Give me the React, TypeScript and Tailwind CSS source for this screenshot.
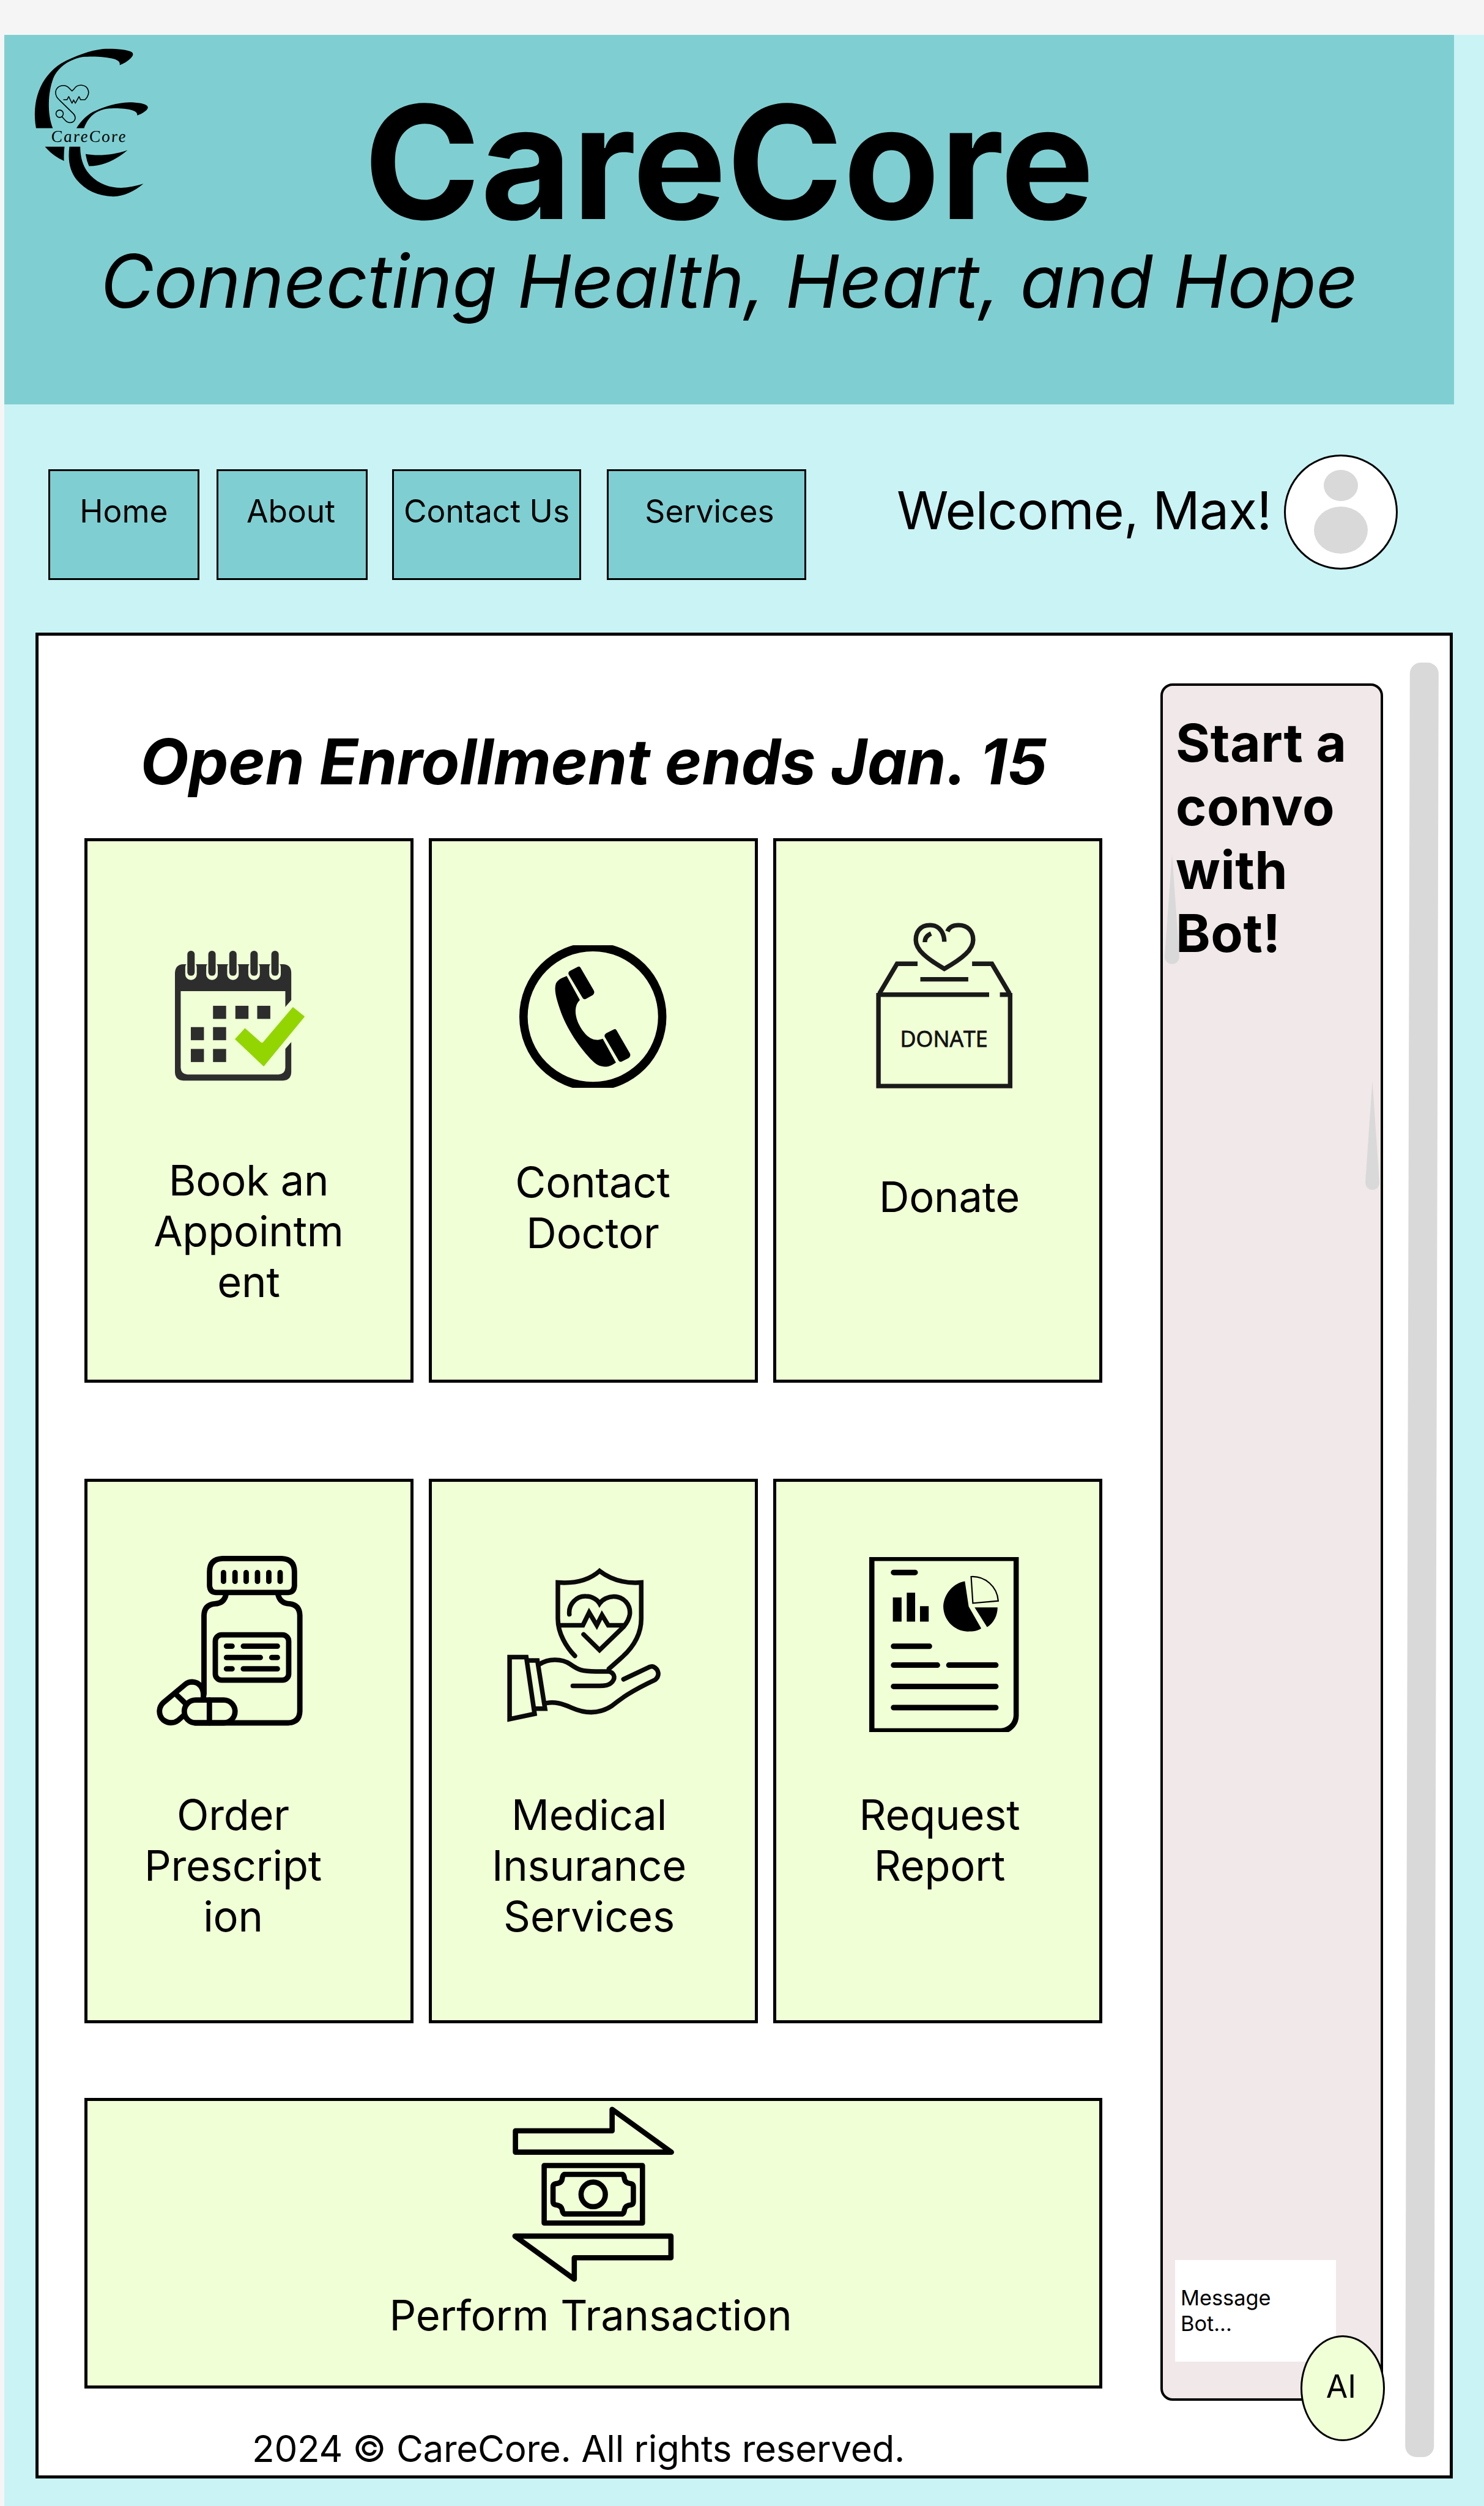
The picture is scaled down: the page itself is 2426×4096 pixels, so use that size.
import React from "react";

type IconProps = { className?: string };

const INK = "#000";

function Logo({ className }: IconProps) {
  return (
    <svg viewBox="0 0 840 960" className={className} aria-label="CareCore logo">
      <path d="M87 524 C60 370 110 230 230 153 C310 108 400 78 470 70 C530 67 610 73 634 88 C648 98 642 110 630 123 C612 140 590 155 566 163 C570 145 556 135 535 128 C480 112 400 112 355 116 C280 130 215 170 185 240 C155 320 150 440 183 524Z" />
      <path d="M318 524 C345 480 385 440 430 423 C480 400 550 378 620 376 C670 376 715 384 724 397 C732 407 725 417 712 427 C695 440 680 447 666 451 C669 440 660 428 640 422 C600 410 540 408 500 412 C430 420 385 460 362 524Z" />
      <path d="M138 630 H250 Q245 670 247 711 Q185 685 138 630Z" />
      <path d="M278 630 H340 C340 700 360 755 400 795 C450 845 510 865 575 865 C620 864 660 855 702 842 C650 885 590 915 530 915 C440 912 370 880 320 820 C280 770 268 710 278 630Z" />
      <path d="M371 672 C440 684 520 680 611 650 C545 705 470 742 390 741 Q376 710 371 672Z" />
      <g fill="none" stroke={INK} strokeWidth="5.5" strokeLinejoin="round">
        <path d="M243 361 H264 L274 343 L293 381 L302 362 L312 381 L333 343 L342 361 H367 C385 345 392 320 385 305 C375 275 325 265 305 299 L293 311 L275 293 C250 268 205 280 199 315 C197 340 210 352 222 364 L300 440 C315 455 315 475 300 487 C285 495 268 493 255 480 L236 459" />
        <circle cx="222" cy="441" r="21" />
      </g>
      <g transform="translate(176 603) skewX(6)">
        <text
          fontFamily="'Liberation Serif', serif"
          fontStyle="italic"
          fontSize="96"
          textLength="428"
          lengthAdjust="spacing"
        >
          CareCore
        </text>
      </g>
    </svg>
  );
}

function CalendarIcon({ className }: IconProps) {
  const rings = [256, 376, 496, 617, 737];
  const days = [
    [382, 422],
    [510, 422],
    [635, 422],
    [255, 544],
    [382, 544],
    [255, 669],
    [382, 669],
  ];
  return (
    <svg viewBox="150 100 760 760" className={className} fill="#2d2d2d">
      <path
        fillRule="evenodd"
        d="M212 184 H782 Q830 186 830 234 V802 Q828 848 782 850 H212 Q166 848 164 802 V234 Q166 186 212 184Z M197 338 V777 Q199 813 235 815 H758 Q794 813 796 777 V338Z"
      />
      <path d="M790 435 L836 383 V623 L790 675Z" fill="#f0ffd6" />
      {rings.map((x) => (
        <g key={x}>
          <rect x={x - 33} y="170" width="66" height="104" rx="32" fill="#f0ffd6" />
          <rect x={x - 21} y="107" width="42" height="143" rx="20" />
        </g>
      ))}
      {days.map(([x, y]) => (
        <rect key={`${x}-${y}`} x={x} y={y} width="75" height="75" />
      ))}
      <path
        d="M565 554 L655 634 Q662 638 669 634 L840 433 L903 484 L672 765 L511 613Z"
        fill="#93d500"
        stroke="#93d500"
        strokeWidth="6"
        strokeLinejoin="round"
      />
    </svg>
  );
}

function PhoneIcon({ className }: IconProps) {
  return (
    <svg viewBox="60 196 432 817" preserveAspectRatio="none" className={className}>
      <path
        fillRule="evenodd"
        d="M63.5 605 A212 424.6 0 0 1 487.5 605 A212 424.6 0 0 1 63.5 605Z M87.5 605 A188 374 0 0 0 463.5 605 A188 374 0 0 0 87.5 605Z"
      />
      <path d="M200 372 L238 510 C222 540 223 590 232 635 C243 685 262 735 285 738 C293 739 298 736 304 732 L342 868 C330 885 318 893 310 892 C298 891 288 885 275 860 C240 790 200 680 180 560 C170 500 163 450 169 415 C175 390 190 380 200 372Z" />
      <path d="M232 320 Q237 314 240 325 L278 455 Q282 470 275 482 L256 503 Q250 510 246 498 L206 365 Q203 352 209 343Z" />
      <path d="M336 678 Q341 672 344 684 L382 815 Q386 830 379 842 L359 862 Q353 868 350 858 L310 722 Q307 710 314 700Z" />
    </svg>
  );
}

function DonateIcon({ className }: IconProps) {
  return (
    <svg viewBox="1085 55 405 970" preserveAspectRatio="none" className={className}>
      <g fill="none" stroke="#1a1a1a" strokeWidth="7.4" className="[&_*]:[vector-effect:non-scaling-stroke]">
        <path d="M1097.5 468 V1001 H1476.5 V468" />
        <path d="M1097 478 H1416 M1447 478 H1477" />
        <path d="M1100 472 L1151 301 H1210 M1367 301 H1424 L1475 472" />
        <path d="M1218 390 H1356" />
        <path d="M1287 175 C1287 130 1275 80 1246 80 C1215 80 1205 125 1205 165 C1205 220 1235 270 1287 330 C1340 270 1370 220 1370 165 C1370 115 1355 80 1328 80 C1310 80 1300 95 1296 116" />
        <path d="M1231 178 C1231 155 1237 138 1249 128" />
      </g>
      <text
        transform="translate(1160 775) scale(1.762 3.506)"
        fontFamily="'Open Sans', sans-serif"
        fontSize="36"
        fontWeight="500"
        textLength="143"
        lengthAdjust="spacingAndGlyphs"
        fill="#111"
        stroke="#111"
        strokeWidth="0.9"
      >
        DONATE
      </text>
    </svg>
  );
}

function PrescriptionIcon({ className }: IconProps) {
  return (
    <svg
      viewBox="50 80 860 1000"
      className={className}
      fill="none"
      stroke={INK}
      strokeWidth="31"
      strokeLinecap="round"
      strokeLinejoin="round"
    >
      <path d="M435 109 H775 Q848 112 848 185 V265 Q846 302 812 304 H397 Q363 302 361 265 V185 Q361 112 435 109Z" />
      <path d="M441 190 V240 M507 190 V240 M571 190 V240 M636 190 V240 M701 190 V240 M766 190 V240" />
      <path d="M456 312 Q446 367 390 369 Q331 375 329 435 V885 L325 908" />
      <path d="M753 312 Q764 367 820 369 Q877 375 879 435 V985 Q877 1048 815 1052 H275" />
      <rect x="394" y="547" width="421" height="260" rx="36" />
      <path d="M458 612 H490 M555 612 H750 M458 677 H652 M718 677 H750 M458 742 H490 M555 742 H750" />
      <rect x="216" y="921" width="291" height="131" rx="65" />
      <path d="M360 921 V1052" />
      <path d="M325 905 C330 850 300 818 262 817 Q238 817 220 832 L98 934 C64 965 68 1010 95 1035 C125 1058 158 1054 180 1038 L212 1010" />
      <path d="M165 885 L220 938" />
    </svg>
  );
}

function InsuranceIcon({ className }: IconProps) {
  return (
    <svg viewBox="35 155 465 900" preserveAspectRatio="none" className={className}>
      <g
        fill="none"
        stroke="#0a0a0a"
        strokeWidth="7.5"
        strokeLinecap="round"
        className="[&_*]:[vector-effect:non-scaling-stroke]"
      >
        <path d="M239 668 C215 620 190 540 190 455 V248 C240 255 280 235 310 182 C345 235 385 255 430 248 V455 C430 560 400 630 375 675 L337 742" />
        <path d="M223 430 C220 370 245 325 270 327 C290 327 305 350 310 368 C318 345 335 327 352 328 C380 330 400 375 397 430 C395 460 388 480 380 500 L310 635 L264 545" />
        <path d="M196 493 H262 L280 420 L302 493 L317 434 L335 493 H378" />
        <path d="M51 675 H99 L123 1000 L51 1030Z" />
        <path d="M105 694 H131 L153 970 H125" />
        <path d="M138 715 C160 685 200 680 225 715 C250 750 260 757 300 757 H338 C355 770 357 800 342 825 C335 838 325 840 310 840 H233" />
        <path d="M157 938 C180 930 200 938 230 965 C270 1000 310 1000 345 955 C370 915 400 870 470 805 C485 780 480 745 465 730 Q460 726 452 733 L379 802" />
      </g>
    </svg>
  );
}

function ReportIcon({ className }: IconProps) {
  return (
    <svg viewBox="1080 95 445 1015" preserveAspectRatio="none" className={className}>
      <path
        fillRule="evenodd"
        d="M1087 102 H1517 V1010 C1517 1060 1500 1090 1488 1103 H1087Z M1102 125 V1081 H1465 C1490 1078 1502 1040 1502 1005 V125Z"
      />
      <path d="M1155 333 H1180 V471 H1155Z M1195 306 H1219 V471 H1195Z M1233 383 H1258 V471 H1233Z" />
      <path d="M1362 240 L1373 385 L1409 510 C1400 525 1385 528 1370 528 C1330 525 1300 460 1300 383 C1302 310 1330 250 1362 240Z" />
      <path d="M1390 390 H1456 C1456 435 1445 480 1426 503Z" />
      <g fill="none" stroke={INK} className="[&_*]:[vector-effect:non-scaling-stroke]">
        <path d="M1380 214 C1420 210 1455 270 1458 353 L1385 366Z" strokeWidth="2.2" />
        <path
          d="M1157 190 H1219 M1157 612 H1260 M1157 720 H1283 M1316 720 H1451 M1157 842 H1451 M1157 963 H1451"
          strokeWidth="9"
          strokeLinecap="round"
        />
      </g>
    </svg>
  );
}

function TransactionIcon({ className }: IconProps) {
  return (
    <svg viewBox="170 115 710 675" preserveAspectRatio="none" className={className}>
      <g
        fill="none"
        stroke={INK}
        strokeWidth="8.6"
        strokeLinejoin="round"
        className="[&_*]:[vector-effect:non-scaling-stroke]"
      >
        <path d="M190 215 H604 V135 L858 295 H190Z" />
        <path d="M188 609 H856 V690 H442 V770Z" />
        <path d="M313 345 H734 V560 H313Z" />
        <path d="M400 378 H648 Q655 380 657 395 Q660 411 685 413 Q695 415 695 425 V480 Q695 490 685 492 Q660 494 657 510 Q655 524 648 526 H400 Q392 524 390 510 Q386 494 362 492 Q351 490 351 480 V425 Q351 415 362 413 Q388 411 390 395 Q392 380 400 378Z" />
        <ellipse cx="523" cy="453" rx="52" ry="46" />
      </g>
    </svg>
  );
}

function Spike({ className }: IconProps) {
  return (
    <svg viewBox="0 0 24 180" preserveAspectRatio="none" className={className} fill="#d9d9d9">
      <path d="M12 0 L24 167 C24 184 0 184 0 167Z" />
    </svg>
  );
}

function NavButton({ label, className }: { label: string; className: string }) {
  return (
    <a
      className={`block h-[181px] shrink-0 border-[3px] border-black bg-[#7fcfd2] pt-[34px] text-center text-[51.5px] leading-[62px] whitespace-nowrap ${className}`}
    >
      {label}
    </a>
  );
}

function ServiceCard({
  icon,
  lines,
  iconArea,
  textShift = "",
}: {
  icon: React.ReactNode;
  lines: string[];
  iconArea: string;
  textShift?: string;
}) {
  return (
    <div className="h-[890px] w-[538px] shrink-0 border-[5px] border-black bg-[#f0ffd6]">
      <div className={iconArea}>{icon}</div>
      <div className={`text-center text-[68.6px] leading-[83px] tracking-[-0.2px] ${textShift}`}>
        {lines.map((line) => (
          <div key={line}>{line}</div>
        ))}
      </div>
    </div>
  );
}

export default function App() {
  return (
    <div className="h-[4096px] w-[2426px] overflow-hidden bg-[#f5f5f5] pt-[57px] pl-[7px] font-['Inter',sans-serif] text-black">
      <div className="h-[4039px] bg-[#caf3f5]">
        <header className="relative h-[604px] w-[2370px] bg-[#7fcfd2] pt-[86px] text-center whitespace-nowrap">
          <Logo className="absolute top-[3px] left-[27px] h-[274px] w-[240px]" />
          <h1 className="text-[257.4px] leading-[244px] font-bold tracking-[0.3px]">CareCore</h1>
          <p className="text-[120.1px] leading-[145px] tracking-[-0.45px] italic">
            Connecting Health, Heart, and Hope
          </p>
        </header>

        <nav className="flex h-[373px] items-start pt-[106px] pl-[72px]">
          <NavButton label="Home" className="w-[247px]" />
          <NavButton label="About" className="ml-[28px] w-[247px] pr-1" />
          <NavButton label="Contact Us" className="ml-[40px] w-[309px]" />
          <NavButton label="Services" className="ml-[42px] w-[326px] pl-2.5" />
          <div className="mt-[15px] ml-[148px] w-[633px] shrink-0 text-[85.8px] leading-[104px] tracking-[-0.8px] whitespace-nowrap">
            Welcome, Max!
          </div>
          <div className="-mt-[24px] flex h-[188px] w-[186px] flex-col items-center rounded-[50%] border-[3px] border-black bg-white pt-[22px]">
            <div className="h-[51px] w-[56px] rounded-[50%] bg-[#d9d9d9]" />
            <div className="mt-[9px] h-[77px] w-[88px] rounded-[50%] bg-[#d9d9d9]" />
          </div>
        </nav>

        <main className="ml-[51px] flex h-[3017px] w-[2317px] items-start border-[5px] border-black bg-white pl-[75px]">
          <section className="w-[1664px] shrink-0 pt-[143px]">
            <h2 className="pl-px text-center text-[103px] leading-[125px] font-bold tracking-[-0.18px] whitespace-nowrap italic">
              Open Enrollment ends Jan. 15
            </h2>

            <div className="mt-[63px] flex justify-between">
              <ServiceCard
                icon={<CalendarIcon className="h-[217px] w-[217px]" />}
                iconArea="h-[513px] pt-[177px] pl-[139px]"
                lines={["Book an", "Appointm", "ent"]}
                textShift="pr-[1px]"
              />
              <ServiceCard
                icon={<PhoneIcon className="h-[233px] w-[245px]" />}
                iconArea="h-[516px] pt-[170px] pl-[141px]"
                lines={["Contact", "Doctor"]}
                textShift="pr-[2px]"
              />
              <ServiceCard
                icon={<DonateIcon className="h-[277px] w-[230px]" />}
                iconArea="h-[540px] pt-[130px] pl-[160px]"
                lines={["Donate"]}
                textShift="pl-[38px]"
              />
            </div>

            <div className="mt-[157px] flex justify-between">
              <ServiceCard
                icon={<PrescriptionIcon className="h-[285px] w-[245px]" />}
                iconArea="h-[503px] pt-[117px] pl-[111px]"
                lines={["Order", "Prescript", "ion"]}
                textShift="pr-[52px]"
              />
              <ServiceCard
                icon={<InsuranceIcon className="h-[257px] w-[264px]" />}
                iconArea="h-[503px] pt-[138px] pl-[118px]"
                lines={["Medical", "Insurance", "Services"]}
                textShift="pr-[14px]"
              />
              <ServiceCard
                icon={<ReportIcon className="h-[290px] w-[253px]" />}
                iconArea="h-[503px] pt-[121px] pl-[148px]"
                lines={["Request", "Report"]}
                textShift="pl-[6px]"
              />
            </div>

            <div className="mt-[122px] h-[475px] border-[5px] border-black bg-[#f0ffd6] pt-[5px]">
              <TransactionIcon className="ml-[692px] h-[295px] w-[271px]" />
              <div className="mt-[9px] pr-[9px] text-center text-[68.6px] leading-[83px] tracking-[-0.15px]">
                Perform Transaction
              </div>
            </div>

            <footer className="mt-[62px] pr-[49px] text-center text-[60.1px] leading-[73px] tracking-[-0.28px]">
              2024 © CareCore. All rights reserved.
            </footer>
          </section>

          <aside className="relative mt-[78px] ml-[95px] flex h-[2807px] w-[364px] shrink-0 flex-col rounded-[20px] border-4 border-black bg-[#f1e8e9] pt-[42px] pl-[21px]">
            <Spike className="absolute top-[275px] left-[3px] h-[180px] w-[24px]" />
            <Spike className="absolute top-[646px] left-[331px] h-[178px] w-[23px]" />
            <h3 className="relative text-[85.8px] leading-[103.8px] font-bold tracking-[0.5px]">
              Start a<br />
              convo
              <br />
              with
              <br />
              Bot!
            </h3>
            <div className="mt-auto mb-[60px] -ml-px h-[166px] w-[263px] bg-white pt-[41px] pl-[9px] text-[34.3px] leading-[41.5px]">
              Message
              <br />
              Bot...
            </div>
            <div className="absolute top-[2696px] left-[225px] flex h-[173px] w-[138px] items-center justify-center rounded-[50%] border-[3px] border-black bg-[#f0ffd6] pr-[5px] pb-[8px] text-[51.5px] leading-[62px]">
              AI
            </div>
          </aside>

          <div className="mt-[44px] ml-[40px] h-[2933px] w-[46.5px] shrink-0 rotate-[0.15deg] rounded-[18px] bg-[#d9d9d9]" />
        </main>
      </div>
    </div>
  );
}
